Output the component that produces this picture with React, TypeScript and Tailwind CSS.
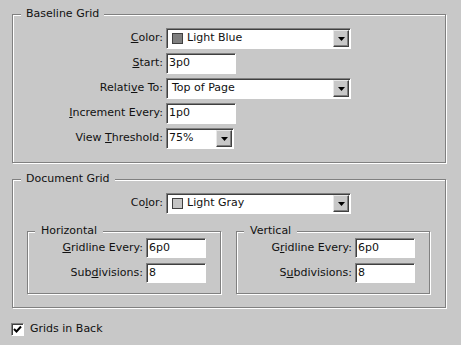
import React from "react";

function Mn({ text, u }: { text: string; u: number }) {
  return (
    <>
      {text.slice(0, u)}
      <u className="underline-offset-[1px]">{text[u]}</u>
      {text.slice(u + 1)}
    </>
  );
}

function Group({ title, sub, className = "", children }: { title: string; sub?: boolean; className?: string; children: React.ReactNode }) {
  return (
    <fieldset className={`border border-[#808080] shadow-[1px_1px_0_#fff,inset_1px_1px_0_#fff] ${className}`}>
      <legend className={`${sub ? "ml-[7px] pl-[6px] pr-[6px]" : "ml-[8px] px-[5px]"} bg-[#c8c8c8] leading-[14px]`}>{title}</legend>
      {children}
    </fieldset>
  );
}

function Arrow() {
  return (
    <div className="flex h-full w-[16px] shrink-0 items-center justify-center border border-t-[#e8e8e8] border-l-[#e8e8e8] border-b-[#404040] border-r-[#404040] bg-[#c8c8c8] shadow-[inset_-1px_-1px_0_#808080]">
      <svg width="7" height="4" viewBox="0 0 7 4">
        <polygon points="0,0 7,0 3.5,4" fill="#000" />
      </svg>
    </div>
  );
}

function Sunken({ className = "", children }: { className?: string; children?: React.ReactNode }) {
  return (
    <div className={`flex items-stretch border border-t-[#808080] border-l-[#808080] border-b-white border-r-white bg-white p-[1px] shadow-[inset_1px_1px_0_#404040] ${className}`}>
      {children}
    </div>
  );
}

function Select({ className, children }: { className: string; children: React.ReactNode }) {
  return (
    <Sunken className={`h-[21px] ${className}`}>
      <div className="flex min-w-0 flex-1 items-center whitespace-nowrap">{children}</div>
      <Arrow />
    </Sunken>
  );
}

function Swatch({ fill }: { fill: string }) {
  return <span className={`ml-[4px] mr-[4px] inline-block h-[11px] w-[11px] border border-[#404040] ${fill}`} />;
}

function Field({ value, className }: { value: string; className: string }) {
  return (
    <Sunken className={className}>
      <div className="flex items-center pl-[1px]">{value}</div>
    </Sunken>
  );
}

export default function App() {
  return (
    <div className="h-[345px] w-[461px] bg-[#c8c8c8] pl-[12px] pt-[7px] font-['DejaVu_Sans',sans-serif] text-[11px] text-[#111]">
      <Group title="Baseline Grid" className="w-[434px] pb-[13px] pt-[7px]">
        <div className="grid grid-cols-[150px_auto] items-center gap-x-[3px] gap-y-[4px]">
          <span className="text-right"><Mn text="Color:" u={0} /></span>
          <Select className="w-[185px]">
            <Swatch fill="bg-[#7f7f7f]" />
            Light Blue
          </Select>
          <span className="text-right"><Mn text="Start:" u={0} /></span>
          <Field value="3p0" className="h-[21px] w-[70px]" />
          <span className="text-right"><Mn text="Relative To:" u={6} /></span>
          <Select className="w-[185px]">
            <span className="pl-[4px]">Top of Page</span>
          </Select>
          <span className="text-right"><Mn text="Increment Every:" u={0} /></span>
          <Field value="1p0" className="h-[21px] w-[70px]" />
          <span className="text-right">View <Mn text="Threshold:" u={0} /></span>
          <Select className="w-[68px]">
            <span className="pl-[1px]">75%</span>
          </Select>
        </div>
      </Group>

      <Group title="Document Grid" className="mt-[9px] w-[434px] pb-[13px] pt-[7px]">
        <div className="grid grid-cols-[150px_auto] items-center gap-x-[3px]">
          <span className="text-right"><Mn text="Color:" u={2} /></span>
          <Select className="w-[185px]">
            <Swatch fill="bg-[#c4c4c4]" />
            Light Gray
          </Select>
        </div>
        <div className="ml-[14px] mt-[10px] flex gap-[15px]">
          <Group title="Horizontal" sub className="w-[194px] pb-[10px]">
            <div className="grid grid-cols-[115px_60px] items-center gap-x-[3px] gap-y-[5px]">
              <span className="text-right"><Mn text="Gridline Every:" u={0} /></span>
              <Field value="6p0" className="h-[20px]" />
              <span className="text-right"><Mn text="Subdivisions:" u={3} /></span>
              <Field value="8" className="h-[20px]" />
            </div>
          </Group>
          <Group title="Vertical" sub className="w-[194px] pb-[10px]">
            <div className="grid grid-cols-[115px_60px] items-center gap-x-[3px] gap-y-[5px]">
              <span className="text-right"><Mn text="Gridline Every:" u={1} /></span>
              <Field value="6p0" className="h-[20px]" />
              <span className="text-right"><Mn text="Subdivisions:" u={1} /></span>
              <Field value="8" className="h-[20px]" />
            </div>
          </Group>
        </div>
      </Group>

      <label className="mt-[13px] flex items-center gap-[6px]">
        <span className="-ml-[1px] flex h-[13px] w-[13px] items-center justify-center border border-t-[#808080] border-l-[#808080] border-b-white border-r-white bg-white shadow-[inset_1px_1px_0_#404040]">
          <svg width="9" height="9" viewBox="0 0 9 9">
            <polyline points="1,4 3.5,6.5 8,1.5" fill="none" stroke="#000" strokeWidth="2" />
          </svg>
        </span>
        Grids in Back
      </label>
    </div>
  );
}
